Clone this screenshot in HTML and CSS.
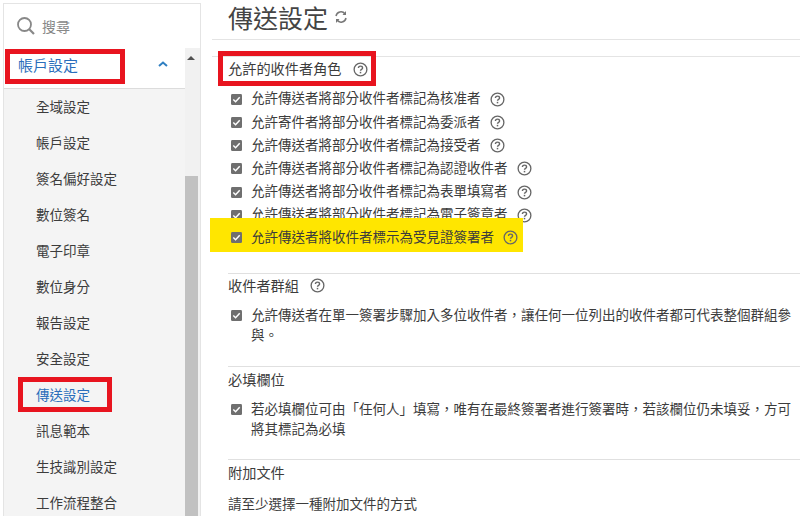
FILE: index.html
```html
<!DOCTYPE html>
<html lang="zh-Hant">
<head>
    <meta charset="UTF-8">
    <title>傳送設定</title>
    <link rel="stylesheet" href="styles.css">
</head>
<body>
<svg class="defs" width="0" height="0">
    <symbol id="help" viewBox="0 0 16 16">
        <circle cx="8" cy="8" r="6.8" fill="none" stroke="#666" stroke-width="1.400"/>
        <path d="M5.800 6.400c0-1.300 1-2 2.200-2s2.200.7 2.200 1.900c0 1.600-2.200 1.500-2.200 3.100" fill="none" stroke="#666" stroke-width="1.500"/>
        <rect x="7.200" y="10.500" width="1.600" height="1.600" fill="#666"/>
    </symbol>
    <symbol id="check" viewBox="0 0 12 12">
        <rect width="12" height="12" rx="1.500" fill="#6f6f6f"/>
        <path d="M2.500 6l2.500 2.500 4.500-5" fill="none" stroke="#fff" stroke-width="1.600"/>
    </symbol>
</svg>
<div class="container">
    <div class="sidebar">
        <div class="search">
            <svg class="searchIcon" width="20" height="20" viewBox="0 0 20 20">
                <circle cx="8.500" cy="8.500" r="6.500" fill="none" stroke="#888" stroke-width="1.800"/>
                <path d="M13.300 13.300l4.700 4.700" stroke="#888" stroke-width="2.200"/>
            </svg>
            <span>搜尋</span>
        </div>
        <div class="menu">
            <div class="menuList">
                <div class="menuHead">
                    <span>帳戶設定</span>
                    <svg width="10" height="6" viewBox="0 0 10 6"><path d="M1 5l4-3.500 4 3.500" fill="none" stroke="#2f7fc1" stroke-width="2"/></svg>
                </div>
                <ul>
                    <li>全域設定</li>
                    <li>帳戶設定</li>
                    <li>簽名偏好設定</li>
                    <li>數位簽名</li>
                    <li>電子印章</li>
                    <li>數位身分</li>
                    <li>報告設定</li>
                    <li>安全設定</li>
                    <li class="active">傳送設定</li>
                    <li>訊息範本</li>
                    <li>生技識別設定</li>
                    <li>工作流程整合</li>
                </ul>
            </div>
            <div class="scrollbar">
                <div class="arrow"></div>
                <div class="thumb"></div>
            </div>
        </div>
        <div class="mark markAccount"></div>
        <div class="mark markSend"></div>
    </div>
    <div class="main">
        <div class="title">
            <h1>傳送設定</h1>
            <svg width="14" height="14" viewBox="0 0 14 14"><path d="M2 6a5 5 0 0 1 9-2M12 8a5 5 0 0 1-9 2" fill="none" stroke="#777" stroke-width="1.500"/><path d="M12 1v4H8.500zM2 13V9h3.500z" fill="#777"/></svg>
        </div>
        <div class="content">
            <div class="section first">
                <div class="heading">允許的收件者角色 <svg class="help"><use href="#help"/></svg></div>
                <div class="row"><svg class="check"><use href="#check"/></svg><span>允許傳送者將部分收件者標記為核准者</span><svg class="help"><use href="#help"/></svg></div>
                <div class="row"><svg class="check"><use href="#check"/></svg><span>允許寄件者將部分收件者標記為委派者</span><svg class="help"><use href="#help"/></svg></div>
                <div class="row"><svg class="check"><use href="#check"/></svg><span>允許傳送者將部分收件者標記為接受者</span><svg class="help"><use href="#help"/></svg></div>
                <div class="row"><svg class="check"><use href="#check"/></svg><span>允許傳送者將部分收件者標記為認證收件者</span><svg class="help"><use href="#help"/></svg></div>
                <div class="row"><svg class="check"><use href="#check"/></svg><span>允許傳送者將部分收件者標記為表單填寫者</span><svg class="help"><use href="#help"/></svg></div>
                <div class="row"><svg class="check"><use href="#check"/></svg><span>允許傳送者將部分收件者標記為電子簽章者</span><svg class="help"><use href="#help"/></svg></div>
                <div class="row highlight"><svg class="check"><use href="#check"/></svg><span>允許傳送者將收件者標示為受見證簽署者</span><svg class="help"><use href="#help"/></svg></div>
                <div class="mark markRoles"></div>
            </div>
            <div class="section group">
                <div class="heading">收件者群組 <svg class="help"><use href="#help"/></svg></div>
                <div class="row long"><svg class="check"><use href="#check"/></svg><span>允許傳送者在單一簽署步驟加入多位收件者，讓任何一位列出的收件者都可代表整個群組參與。</span></div>
            </div>
            <div class="section">
                <div class="heading">必填欄位</div>
                <div class="row long"><svg class="check"><use href="#check"/></svg><span>若必填欄位可由「任何人」填寫，唯有在最終簽署者進行簽署時，若該欄位仍未填妥，方可將其標記為必填</span></div>
            </div>
            <div class="section">
                <div class="heading">附加文件</div>
                <div class="note">請至少選擇一種附加文件的方式</div>
            </div>
        </div>
    </div>
</div>
</body>
</html>
```

FILE: styles.css
```css
*{
    margin: 0;
    padding: 0;
    box-sizing: border-box;
}
html,body{
    height: 516px;
    overflow: hidden;
    background: #fff;
}
body{
    font-family: "Liberation Sans", "Noto Sans CJK TC", sans-serif;
    font-size: 13.500px;
    color: #3c3c3c;
}
.defs{
    position: absolute;
}
.container{
    display: flex;
    height: 516px;
}
.sidebar{
    position: relative;
    width: 198px;
    margin: 3px 0 0 3px;
    border-left: 1px solid #e4e4e4;
    border-right: 1px solid #e4e4e4;
    border-top: 1px solid #e4e4e4;
    flex-shrink: 0;
}
.search{
    height: 44px;
    display: flex;
    align-items: center;
    padding-left: 12px;
    gap: 6px;
    color: #888;
    font-size: 14px;
}
.menu{
    display: flex;
    height: 470px;
}
.menuList{
    width: 181px;
    background: #f4f4f4;
}
.menuHead{
    height: 41px;
    background: #fff;
    border-bottom: 1px solid #dcdcdc;
    display: flex;
    align-items: center;
    justify-content: space-between;
    padding: 0 17px 8px 14px;
    color: #2a6ebb;
    font-size: 15px;
}
ul{
    list-style: none;
    padding-top: 1px;
}
li{
    height: 36px;
    line-height: 36px;
    padding-left: 32px;
}
li.active{
    color: #2a6ebb;
}
.scrollbar{
    width: 15px;
    background: #f1f1f1;
}
.arrow{
    width: 0;
    height: 0;
    margin: 8px 0 0 2px;
    border-left: 4px solid transparent;
    border-right: 4px solid transparent;
    border-bottom: 4px solid #505050;
}
.thumb{
    width: 13px;
    height: 340px;
    margin-top: 116px;
    background: #c1c1c1;
}
.mark{
    position: absolute;
    border: 5px solid #e8141f;
}
.markAccount{
    left: 1px;
    top: 45px;
    width: 120px;
    height: 35px;
}
.markSend{
    left: 14px;
    top: 373px;
    width: 94px;
    height: 35px;
}
.main{
    flex: 1;
    margin-left: 11px;
}
.title{
    height: 40px;
    border-bottom: 1px solid #e4e4e4;
    padding: 0 0 6px 16px;
    display: flex;
    align-items: center;
    gap: 6px;
}
h1{
    font-size: 25px;
    font-weight: 400;
    color: #444;
}
.content{
    margin-top: 16px;
    border-top: 1px solid #e4e4e4;
    padding-left: 16px;
}
.section{
    position: relative;
    border-top: 1px solid #e0e0e0;
    padding: 3px 0 19px;
}
.section.first{
    border-top: 0;
    padding: 2px 0 21px;
}
.section.group{
    padding: 2px 0 20px;
}
.heading{
    display: flex;
    align-items: center;
    gap: 11.500px;
    line-height: 20px;
    margin-bottom: 10px;
    font-size: 14.200px;
}
.first .heading{
    margin-bottom: 8.800px;
}
.row{
    display: flex;
    align-items: center;
    gap: 9px;
    min-height: 23.200px;
    position: relative;
    padding-left: 3px;
}
.row span{
    line-height: 20px;
}
.row.long{
    align-items: flex-start;
}
.row.long .check{
    margin-top: 4px;
}
.check{
    width: 11px;
    height: 11px;
    flex-shrink: 0;
}
.help{
    width: 15px;
    height: 15px;
    flex-shrink: 0;
}
.highlight{
    background: #ffe600;
    margin: -9px 0 0 -18px;
    padding: 6px 0 0 21px;
    width: 313px;
    height: 34px;
}
.markRoles{
    left: -10px;
    top: -6px;
    width: 158px;
    height: 35px;
}
.note{
    margin-top: 10px;
}
```
